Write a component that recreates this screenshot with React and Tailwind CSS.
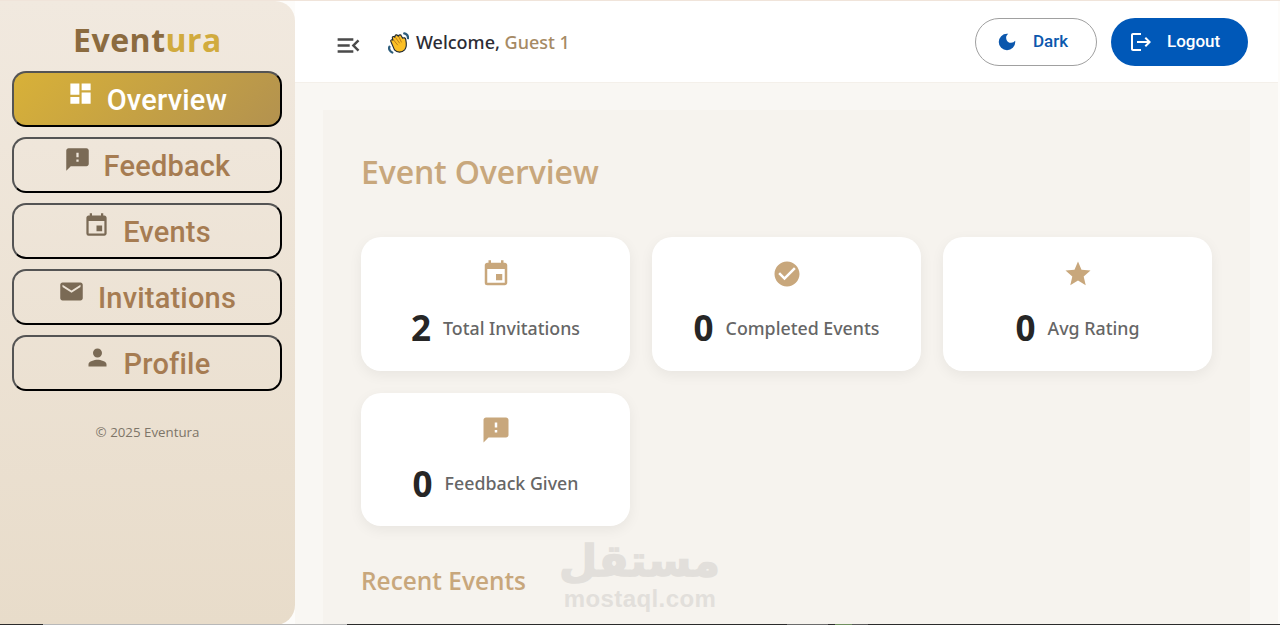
import { MdDashboard, MdFeedback, MdEvent, MdEmail, MdPerson, MdMenuOpen, MdCheckCircle, MdStar, MdLogout, MdDarkMode } from "react-icons/md";

const navItems = [
  { label: "Overview", icon: MdDashboard, active: true },
  { label: "Feedback", icon: MdFeedback },
  { label: "Events", icon: MdEvent },
  { label: "Invitations", icon: MdEmail },
  { label: "Profile", icon: MdPerson },
];

const stats = [
  { value: "2", label: "Total Invitations", icon: MdEvent },
  { value: "0", label: "Completed Events", icon: MdCheckCircle },
  { value: "0", label: "Avg Rating", icon: MdStar },
  { value: "0", label: "Feedback Given", icon: MdFeedback },
];

const WaveHand = () => (
  <svg width="21" height="22" viewBox="0 0 22 22">
    <path d="M1.5 15 C0.5 17 2 20 4.5 21" fill="none" stroke="#2d5d7c" strokeWidth="2.4" strokeLinecap="round" />
    <path d="M17 1 C19.5 1.5 21 3.5 21 6" fill="none" stroke="#2d5d7c" strokeWidth="2.4" strokeLinecap="round" />
    <path d="M3 9.5 C2.2 8 4.2 6.8 5.2 8 L4.6 6 C4 4.4 6.2 3.4 7 5 L7.4 4 C7.2 2.4 9.4 1.8 10.2 3.4 L11 4 C11.2 2.2 13.6 2 14 3.6 L15.4 6 C16.6 5 18.4 5.6 18.6 7.4 C19.4 11 20 15 17.4 18.2 C14.6 21.4 9.6 21.4 6.8 18.2 Z" fill="#fbbf24" stroke="#1f2933" strokeWidth="1.2" strokeLinejoin="round" />
    <path d="M6 8 L10 13 M8 5.4 L12 11 M11.4 4.6 L14 10" stroke="#b9791a" strokeWidth="1" strokeLinecap="round" />
  </svg>
);

export default function App() {
  return (
    <div className="h-screen overflow-hidden bg-[#fdfcfa] flex font-['Open_Sans',sans-serif] border-t border-[#f0e4da] relative">
      {/* sidebar */}
      <aside className="w-[295px] shrink-0 rounded-r-[20px] bg-gradient-to-b from-[#f1e9df] to-[#e8dcca] px-3 flex flex-col">
        <div className="h-[70px] pt-[16px] text-center text-[32px] leading-[46px] font-bold tracking-[0.5px] text-[#8b6b3f]">
          Event<span className="text-[#d1ab3e]">ura</span>
        </div>
        <nav className="flex flex-col gap-[10px]">
          {navItems.map((item) => {
            const Icon = item.icon;
            return (
              <button
                key={item.label}
                className={`h-[56px] w-[270px] flex items-center justify-center gap-[13px] rounded-[14px] border-2 [border-style:outset] border-black font-['Roboto',sans-serif] font-medium text-[29px] tracking-[0.2px] ${
                  item.active
                    ? "bg-[linear-gradient(135deg,#d8b138,#b3924f)] text-white"
                    : "text-[#a67c52]"
                }`}
              >
                <Icon size={27} className={`mb-[11px] ${item.active ? "text-white" : "text-[#7a6a55]"}`} />
                <span className="pt-[3px]">{item.label}</span>
              </button>
            );
          })}
        </nav>
        <p className="mt-[32px] text-center text-[13.3px] leading-[18px] text-[#7d7568]">© 2025 Eventura</p>
      </aside>

      {/* right side */}
      <div className="flex-1 min-w-0 pr-[2px] flex flex-col">
        <header className="h-[82px] shrink-0 bg-white border-b border-[#f4f0ea] flex items-center pl-[39px] pr-[30px]">
          <MdMenuOpen size={29} className="text-[#4a4a4a] mt-[7px]" />
          <div className="ml-[25px] mt-[2px] flex items-center gap-[7px] font-['Noto_Sans',sans-serif] text-[18px] font-medium text-[#2c2c34]">
            <WaveHand />
            <span>
              Welcome, <span className="text-[#a68a64]">Guest 1</span>
            </span>
          </div>
          <div className="ml-auto flex items-center gap-[14px] font-['Roboto',sans-serif] font-medium text-[17px]">
            <button className="w-[122px] h-[48px] rounded-full border border-[#a0a0a0] bg-white text-[#0b57ad] flex items-center pl-[20px] gap-[15px]">
              <MdDarkMode size={22} />
              Dark
            </button>
            <button className="w-[137px] h-[48px] rounded-full bg-[#0058b8] text-white flex items-center pl-[18px] gap-[14px]">
              <MdLogout size={24} />
              Logout
            </button>
          </div>
        </header>

        <main className="flex-1 min-h-0 overflow-hidden bg-[#f9f7f3] pl-[28px] pr-[28px] pt-[27px]">
          <div className="bg-[#f6f3ee] px-[38px] pt-[40px] h-[600px]">
            <h1 className="text-[32px] leading-[44px] font-semibold tracking-[-0.15px] text-[#c8a77c]">Event Overview</h1>
            <div className="mt-[43px] grid grid-cols-3 gap-[22px]">
              {stats.map((stat) => {
                const Icon = stat.icon;
                return (
                  <div
                    key={stat.label}
                    className="h-[133.5px] rounded-[20px] bg-white shadow-[0_4px_14px_rgba(0,0,0,0.06)] flex flex-col items-center pt-[22px]"
                  >
                    <Icon size={30} className="text-[#c8a77c]" />
                    <div className="mt-[16px] flex items-center gap-[12px]">
                      <span className="text-[35px] leading-[46px] font-bold text-[#262626]">{stat.value}</span>
                      <span className="font-['Noto_Sans',sans-serif] text-[17.8px] font-medium text-[#666666]">{stat.label}</span>
                    </div>
                  </div>
                );
              })}
            </div>
            <h2 className="mt-[37px] text-[24.4px] leading-[36px] font-semibold text-[#c8a77c]">Recent Events</h2>
          </div>
        </main>
      </div>

      {/* mostaql watermark */}
      <div className="absolute left-[560px] top-[530px] w-[160px] text-center text-[#e2dfdb] font-bold pointer-events-none">
        <div dir="rtl" className="font-['DejaVu_Sans',sans-serif] text-[44px] leading-[56px] pt-[2px] h-[56px] [-webkit-text-stroke:1.5px_#e2dfdb]">مستقل</div>
        <div className="font-['Liberation_Sans',sans-serif] text-[24px] leading-[24px] tracking-[0.4px]">mostaql.com</div>
      </div>

      {/* strip of the window below, cut off at the bottom edge */}
      <div className="absolute left-0 right-0 bottom-0 h-px flex bg-[#2b2b2b]">
        <div className="ml-[43px] w-[304px] bg-[#b8b8b8]" />
        <div className="ml-[440px] w-[41px] bg-[#6b6b6b]" />
        <div className="ml-[7px] w-[17px] bg-[#6f8f5f]" />
        <div className="ml-0 w-[16px] bg-[#5a5a5a]" />
      </div>
    </div>
  );
}
